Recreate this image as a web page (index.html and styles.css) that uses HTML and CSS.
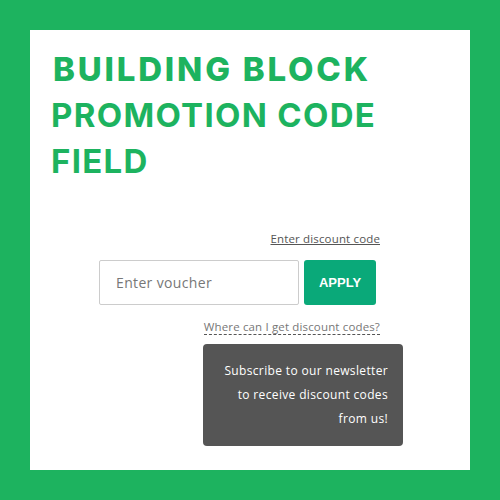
FILE: index.html
```html
<!DOCTYPE html>
<html>
<head>
<meta charset="utf-8">
<link rel="stylesheet" href="styles.css">
</head>
<body>
<main class="card">
  <h1 class="title">BUILDING BLOCK</h1>
  <h2 class="subtitle">PROMOTION CODE FIELD</h2>
  <section class="promo">
    <a class="toggle" href="#">Enter discount code</a>
    <form class="row">
      <input class="voucher" type="text" placeholder="Enter voucher">
      <button class="apply" type="button">APPLY</button>
    </form>
    <a class="help" href="#">Where can I get discount codes?</a>
    <div class="tip">Subscribe to our newsletter<br>to receive discount codes<br>from us!</div>
  </section>
</main>
</body>
</html>
```
FILE: styles.css
```css
html, body { margin: 0; padding: 0; }
body {
  background: #1db35f;
  padding: 30px;
  width: 440px;
  height: 440px;
  font-family: "Open Sans", "DejaVu Sans", sans-serif;
}
.card {
  background: #fff;
  width: 440px;
  height: 440px;
  box-sizing: border-box;
  padding-top: 16px;
}
.title, .subtitle {
  color: #1db35f;
  font-family: Inter, Roboto, "Liberation Sans", sans-serif;
  font-size: 33px;
  line-height: 46px;
}
.title { margin: 0 0 0 23px; font-weight: 800; letter-spacing: 2.8px; }
.subtitle { margin: 0 0 0 21px; font-weight: 700; letter-spacing: 1.3px; width: 360px; }
.promo {
  width: 281px;
  margin: 48px 0 0 69px;
  display: flex;
  flex-direction: column;
  align-items: flex-end;
}
.toggle {
  font-size: 11.5px;
  letter-spacing: 0.15px;
  color: #555;
  text-decoration: underline;
  line-height: 14px;
}
.row {
  display: flex;
  gap: 5px;
  margin: 14px 4px 0 0;
}
.voucher {
  width: 200px;
  height: 45px;
  box-sizing: border-box;
  border: 1px solid #ccc;
  border-radius: 2px;
  padding: 0 16px;
  font-family: inherit;
  font-size: 14px;
  letter-spacing: 0.35px;
  color: #777;
}
.voucher::placeholder { color: #777; }
.apply {
  width: 72px;
  height: 45px;
  border: 0;
  border-radius: 3px;
  background: #0aa979;
  color: #fff;
  font-family: "Liberation Sans", Arial, sans-serif;
  font-weight: 700;
  font-size: 13px;
}
.help {
  margin-top: 15px;
  font-size: 11.5px;
  letter-spacing: 0.15px;
  line-height: 14px;
  color: #777;
  text-decoration: none;
  border-bottom: 1px dashed #555;
}
.tip {
  align-self: flex-start;
  margin: 9px 0 0 104px;
  width: 200px;
  box-sizing: border-box;
  background: #555;
  border-radius: 4px;
  color: #fff;
  text-align: right;
  font-size: 12px;
  letter-spacing: 0.35px;
  line-height: 24px;
  padding: 15px 15px 15px 0;
}
```
